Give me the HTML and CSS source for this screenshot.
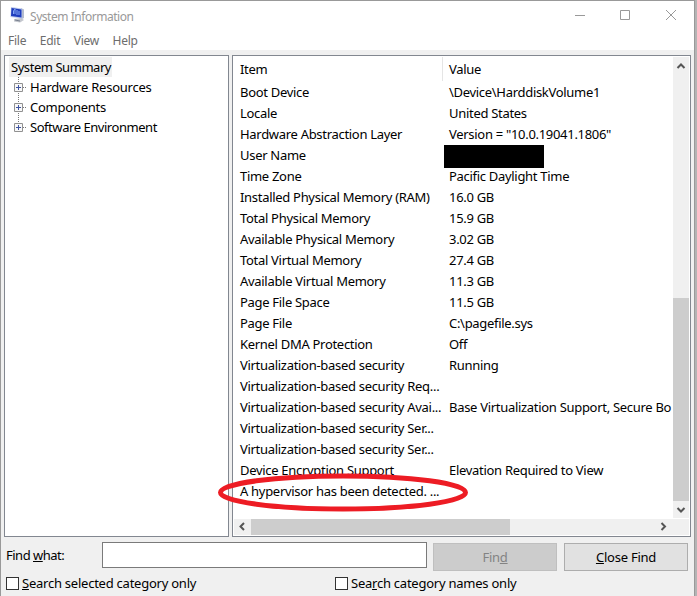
FILE: index.html
```html
<!DOCTYPE html>
<html lang="en">
<head>
<meta charset="utf-8">
<title>System Information</title>
<link rel="stylesheet" href="styles.css">
</head>
<body>
<div class="window">
  <header class="titlebar">
    <svg class="app-icon" width="16" height="16" viewBox="0 0 16 16">
      <path d="M4 12l7-1 3 2-4 2.500-6-1z" fill="#c3c6cd"/>
      <path d="M11 1l3 1.500v8.500l-3 1.500z" fill="#b4bccf"/>
      <path d="M1 0l11 1.500v10L.500 10z" fill="#b9c6ec"/>
      <path d="M1.500 1l10 1.500v8L1 9z" fill="#1f3dbd"/>
      <path d="M3.500 7V4l1.500-2v5M7 3v5M9 4v4" fill="none" stroke="#86a8f5"/>
      <path d="M5 13l5 1" stroke="#777f8e"/>
    </svg>
    <h1>System Information</h1>
    <svg class="controls" width="108" height="12" viewBox="0 0 108 12" fill="none" stroke="#999">
      <path d="M0 5.500h10M45.500 .5h9v9h-9zM91 0l10 10M101 0L91 10"/>
    </svg>
  </header>
  <nav class="menu"><span>File</span><span>Edit</span><span>View</span><span>Help</span></nav>
  <main class="panes">
    <section class="tree">
      <div class="root"><span>System Summary</span></div>
      <div class="node"><svg width="16" height="20"><path class="dots" d="M5.500 0v20M10 10.500h4"/><path class="box" d="M1.500 6.500h8v8h-8z"/><path class="plus" d="M3 10.500h5M5.500 8v5"/></svg><span>Hardware Resources</span></div>
      <div class="node"><svg width="16" height="20"><path class="dots" d="M5.500 0v20M10 10.500h4"/><path class="box" d="M1.500 6.500h8v8h-8z"/><path class="plus" d="M3 10.500h5M5.500 8v5"/></svg><span>Components</span></div>
      <div class="node"><svg width="16" height="20"><path class="dots" d="M5.500 0v10M10 10.500h4"/><path class="box" d="M1.500 6.500h8v8h-8z"/><path class="plus" d="M3 10.500h5M5.500 8v5"/></svg><span class="tight">Software Environment</span></div>
    </section>
    <section class="details">
      <div class="list">
        <div class="row head"><span>Item</span><span>Value</span></div>
        <div class="row"><span>Boot Device</span><span>\Device\HarddiskVolume1</span></div>
        <div class="row"><span>Locale</span><span>United States</span></div>
        <div class="row"><span>Hardware Abstraction Layer</span><span>Version = "10.0.19041.1806"</span></div>
        <div class="row"><span>User Name</span><i class="redacted"></i></div>
        <div class="row"><span>Time Zone</span><span>Pacific Daylight Time</span></div>
        <div class="row"><span>Installed Physical Memory (RAM)</span><span>16.0 GB</span></div>
        <div class="row"><span>Total Physical Memory</span><span>15.9 GB</span></div>
        <div class="row"><span>Available Physical Memory</span><span>3.02 GB</span></div>
        <div class="row"><span>Total Virtual Memory</span><span>27.4 GB</span></div>
        <div class="row"><span>Available Virtual Memory</span><span>11.3 GB</span></div>
        <div class="row"><span>Page File Space</span><span>11.5 GB</span></div>
        <div class="row"><span>Page File</span><span>C:\pagefile.sys</span></div>
        <div class="row"><span>Kernel DMA Protection</span><span>Off</span></div>
        <div class="row"><span>Virtualization-based security</span><span>Running</span></div>
        <div class="row"><span>Virtualization-based security Req...</span></div>
        <div class="row"><span>Virtualization-based security Avai...</span><span>Base Virtualization Support, Secure Bo</span></div>
        <div class="row"><span>Virtualization-based security Ser...</span></div>
        <div class="row"><span>Virtualization-based security Ser...</span></div>
        <div class="row"><span>Device Encryption Support</span><span>Elevation Required to View</span></div>
        <div class="row"><span>A hypervisor has been detected. ...</span></div>
      </div>
      <div class="vscroll">
        <svg width="16" height="17"><path d="M4.500 11L8 7.500l3.500 3.500"/></svg>
        <i class="thumb"></i>
        <svg width="16" height="17"><path d="M4.500 7L8 10.500 11.500 7"/></svg>
      </div>
      <div class="hscroll">
        <svg width="17" height="15"><path d="M10 4L6.500 7.500 10 11"/></svg>
        <i class="thumb"></i>
        <svg width="17" height="15"><path d="M6.500 4L10 7.500 6.500 11"/></svg>
      </div>
    </section>
  </main>
  <footer>
    <div class="find">
      <label>Find <u>w</u>hat:</label>
      <div class="input"></div>
      <div class="button disabled"><span>Fin<u>d</u></span></div>
      <div class="button"><span><u>C</u>lose Find</span></div>
    </div>
    <div class="options">
      <div class="option"><i></i><span><u>S</u>earch selected category only</span></div>
      <div class="option"><i></i><span>Sea<u>r</u>ch category names only</span></div>
    </div>
  </footer>
</div>
<svg class="annotation" width="252" height="40" viewBox="0 0 252 40"><ellipse cx="126" cy="20.500" rx="122.500" ry="16.500"/></svg>
</body>
</html>
```
FILE: styles.css
```css
* { box-sizing: border-box; }
body {
  margin: 0;
  width: 697px;
  height: 596px;
  overflow: hidden;
  background: #b4b4b4;
  font: 13px/20px "Noto Sans", sans-serif;
  letter-spacing: -0.24px;
  color: #000;
  white-space: nowrap;
}
.window {
  width: 695px;
  height: 596px;
  border: 1px solid #999;
  border-bottom: 0;
  background: #f0f0f0;
}
.titlebar {
  display: flex;
  height: 29px;
  padding: 6px 0 0 9px;
  background: #fff;
}
.app-icon { margin-right: 4px; }
h1 {
  margin: 0;
  font-size: 12px;
  line-height: 19px;
  font-weight: 400;
  letter-spacing: -0.46px;
  color: #999;
}
.controls { margin: 3px 11px 0 auto; }
.menu {
  display: flex;
  gap: 13.5px;
  height: 20px;
  padding-left: 7px;
  background: #fff;
  font-size: 12px;
  line-height: 22px;
  color: #6d6d6d;
}
.panes { display: flex; gap: 3px; padding: 5px 0 0 3px; }
.tree, .details {
  height: 482px;
  border: 1px solid #828790;
  background: #fff;
}
.tree { width: 225px; padding: 1px 4px; }
.root { height: 20px; letter-spacing: -0.45px; }
.root span {
  display: inline-block;
  width: 103px;
  height: 20px;
  padding-left: 2px;
  background: #f0f0f0;
}
.node { display: flex; height: 20px; padding-left: 4px; }
.node span { margin-left: 1px; }
.node .tight { letter-spacing: -0.45px; }
.dots { stroke: #777; stroke-dasharray: 1 1; }
.box { fill: #f8f8f8; stroke: #919191; }
.plus { stroke: #4054a0; }
.details {
  display: grid;
  grid-template: 461px 16px / 439px 16px;
  width: 459px;
  padding: 1px;
}
.list { overflow: hidden; letter-spacing: -0.3px; }
.row {
  display: grid;
  grid-template-columns: 209px 224px;
  height: 21px;
  padding-left: 6px;
  line-height: 21px;
}
.row.head { height: 25px; line-height: 25px; }
.head span + span {
  height: 24px;
  margin-left: -7px;
  padding-left: 6px;
  border-left: 1px solid #e5e5e5;
}
.redacted {
  width: 100px;
  height: 23px;
  margin: 0 0 -2px -5px;
  background: #000;
  position: relative;
}
.vscroll { display: flex; flex-direction: column; justify-content: space-between; background: #f0f0f0; }
.vscroll .thumb { height: 203px; margin-top: auto; background: #cdcdcd; }
.hscroll { grid-column: 1 / 3; display: flex; height: 16px; background: #f0f0f0; margin-top: 1px; }
.hscroll .thumb { width: 259px; background: #cdcdcd; }
.hscroll svg:last-child { margin: 0 17px 0 auto; }
.vscroll path, .hscroll path { fill: none; stroke: #555; stroke-width: 2; }
.find { display: flex; align-items: flex-start; height: 34px; padding: 5px 0 0 5px; }
.find label { width: 96px; line-height: 27px; letter-spacing: -0.5px; }
.input { width: 325px; height: 26px; border: 1px solid #7a7a7a; background: #fff; }
.button {
  width: 124px;
  height: 28px;
  margin: 1px 0 0 7px;
  border: 1px solid #adadad;
  background: #e1e1e1;
  line-height: 27px;
  text-align: center;
}
.button.disabled { margin-left: 6px; border-color: #bfbfbf; background: #ccc; color: #838383; }
.options { display: flex; padding: 2px 0 0 5px; }
.option { display: flex; align-items: center; width: 329px; height: 20px; }
.option i { width: 13px; height: 13px; margin-right: 3px; border: 1px solid #333; background: #fff; }
.annotation { position: absolute; left: 217px; top: 472px; }
.annotation ellipse { fill: none; stroke: #ed1c24; stroke-width: 5; }
```
